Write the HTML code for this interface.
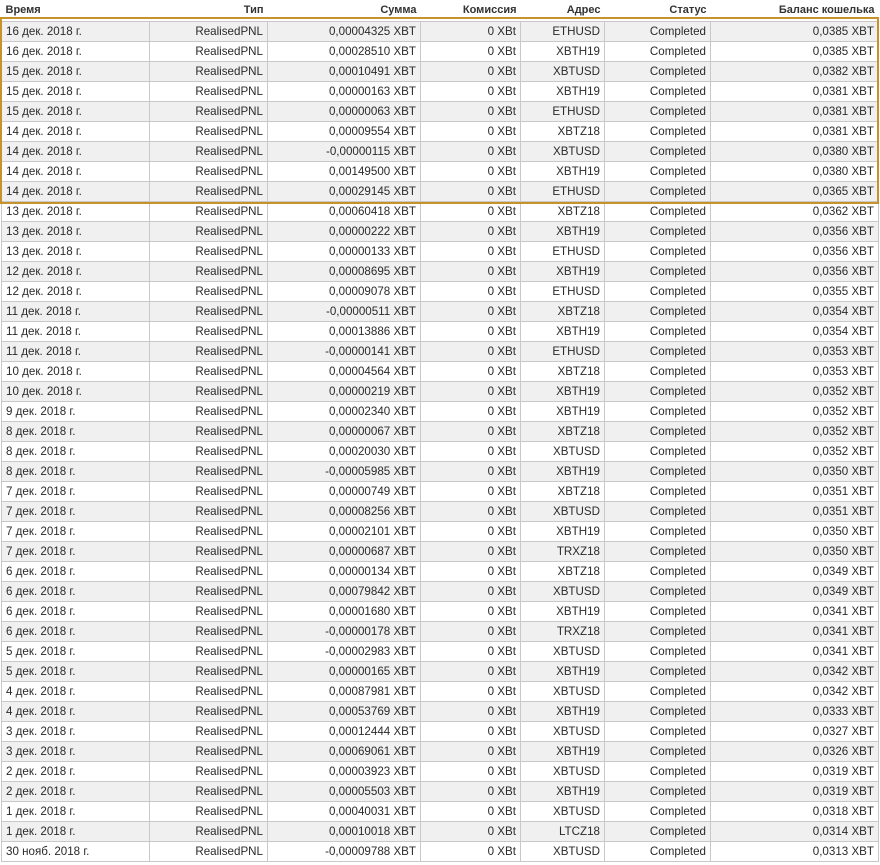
<!DOCTYPE html>
<html><head><meta charset="utf-8"><style>
html,body{margin:0;padding:0;background:#fff;width:880px;height:865px;overflow:hidden}
body{font-family:"Liberation Sans",sans-serif;font-size:11.6px;color:#2a2a2a}
table{position:absolute;left:1px;top:2px;border-collapse:collapse;table-layout:fixed;width:877px}
th{height:19px;font-weight:bold;color:#333;text-align:right;padding:0 4px;border:none;vertical-align:top;line-height:17px;font-size:11px}
th:first-child{text-align:left}
td{height:19px;padding:0 4px;border:1px solid #c8c8c8;text-align:right;line-height:19px;white-space:nowrap;overflow:hidden}
td:first-child{text-align:left}
tbody tr:nth-child(odd){background:#f0f0f0}
.box{position:absolute;left:0;top:17px;width:875px;height:183px;border:2px solid #c8922a;pointer-events:none}
</style></head><body>
<table>
<colgroup><col style="width:148px"><col style="width:118px"><col style="width:153px"><col style="width:100px"><col style="width:84px"><col style="width:106px"><col style="width:168px"></colgroup>
<thead><tr><th>Время</th><th>Тип</th><th>Сумма</th><th>Комиссия</th><th>Адрес</th><th>Статус</th><th>Баланс кошелька</th></tr></thead>
<tbody>
<tr><td>16 дек. 2018 г.</td><td>RealisedPNL</td><td>0,00004325 XBT</td><td>0 XBt</td><td>ETHUSD</td><td>Completed</td><td>0,0385 XBT</td></tr>
<tr><td>16 дек. 2018 г.</td><td>RealisedPNL</td><td>0,00028510 XBT</td><td>0 XBt</td><td>XBTH19</td><td>Completed</td><td>0,0385 XBT</td></tr>
<tr><td>15 дек. 2018 г.</td><td>RealisedPNL</td><td>0,00010491 XBT</td><td>0 XBt</td><td>XBTUSD</td><td>Completed</td><td>0,0382 XBT</td></tr>
<tr><td>15 дек. 2018 г.</td><td>RealisedPNL</td><td>0,00000163 XBT</td><td>0 XBt</td><td>XBTH19</td><td>Completed</td><td>0,0381 XBT</td></tr>
<tr><td>15 дек. 2018 г.</td><td>RealisedPNL</td><td>0,00000063 XBT</td><td>0 XBt</td><td>ETHUSD</td><td>Completed</td><td>0,0381 XBT</td></tr>
<tr><td>14 дек. 2018 г.</td><td>RealisedPNL</td><td>0,00009554 XBT</td><td>0 XBt</td><td>XBTZ18</td><td>Completed</td><td>0,0381 XBT</td></tr>
<tr><td>14 дек. 2018 г.</td><td>RealisedPNL</td><td>-0,00000115 XBT</td><td>0 XBt</td><td>XBTUSD</td><td>Completed</td><td>0,0380 XBT</td></tr>
<tr><td>14 дек. 2018 г.</td><td>RealisedPNL</td><td>0,00149500 XBT</td><td>0 XBt</td><td>XBTH19</td><td>Completed</td><td>0,0380 XBT</td></tr>
<tr><td>14 дек. 2018 г.</td><td>RealisedPNL</td><td>0,00029145 XBT</td><td>0 XBt</td><td>ETHUSD</td><td>Completed</td><td>0,0365 XBT</td></tr>
<tr><td>13 дек. 2018 г.</td><td>RealisedPNL</td><td>0,00060418 XBT</td><td>0 XBt</td><td>XBTZ18</td><td>Completed</td><td>0,0362 XBT</td></tr>
<tr><td>13 дек. 2018 г.</td><td>RealisedPNL</td><td>0,00000222 XBT</td><td>0 XBt</td><td>XBTH19</td><td>Completed</td><td>0,0356 XBT</td></tr>
<tr><td>13 дек. 2018 г.</td><td>RealisedPNL</td><td>0,00000133 XBT</td><td>0 XBt</td><td>ETHUSD</td><td>Completed</td><td>0,0356 XBT</td></tr>
<tr><td>12 дек. 2018 г.</td><td>RealisedPNL</td><td>0,00008695 XBT</td><td>0 XBt</td><td>XBTH19</td><td>Completed</td><td>0,0356 XBT</td></tr>
<tr><td>12 дек. 2018 г.</td><td>RealisedPNL</td><td>0,00009078 XBT</td><td>0 XBt</td><td>ETHUSD</td><td>Completed</td><td>0,0355 XBT</td></tr>
<tr><td>11 дек. 2018 г.</td><td>RealisedPNL</td><td>-0,00000511 XBT</td><td>0 XBt</td><td>XBTZ18</td><td>Completed</td><td>0,0354 XBT</td></tr>
<tr><td>11 дек. 2018 г.</td><td>RealisedPNL</td><td>0,00013886 XBT</td><td>0 XBt</td><td>XBTH19</td><td>Completed</td><td>0,0354 XBT</td></tr>
<tr><td>11 дек. 2018 г.</td><td>RealisedPNL</td><td>-0,00000141 XBT</td><td>0 XBt</td><td>ETHUSD</td><td>Completed</td><td>0,0353 XBT</td></tr>
<tr><td>10 дек. 2018 г.</td><td>RealisedPNL</td><td>0,00004564 XBT</td><td>0 XBt</td><td>XBTZ18</td><td>Completed</td><td>0,0353 XBT</td></tr>
<tr><td>10 дек. 2018 г.</td><td>RealisedPNL</td><td>0,00000219 XBT</td><td>0 XBt</td><td>XBTH19</td><td>Completed</td><td>0,0352 XBT</td></tr>
<tr><td>9 дек. 2018 г.</td><td>RealisedPNL</td><td>0,00002340 XBT</td><td>0 XBt</td><td>XBTH19</td><td>Completed</td><td>0,0352 XBT</td></tr>
<tr><td>8 дек. 2018 г.</td><td>RealisedPNL</td><td>0,00000067 XBT</td><td>0 XBt</td><td>XBTZ18</td><td>Completed</td><td>0,0352 XBT</td></tr>
<tr><td>8 дек. 2018 г.</td><td>RealisedPNL</td><td>0,00020030 XBT</td><td>0 XBt</td><td>XBTUSD</td><td>Completed</td><td>0,0352 XBT</td></tr>
<tr><td>8 дек. 2018 г.</td><td>RealisedPNL</td><td>-0,00005985 XBT</td><td>0 XBt</td><td>XBTH19</td><td>Completed</td><td>0,0350 XBT</td></tr>
<tr><td>7 дек. 2018 г.</td><td>RealisedPNL</td><td>0,00000749 XBT</td><td>0 XBt</td><td>XBTZ18</td><td>Completed</td><td>0,0351 XBT</td></tr>
<tr><td>7 дек. 2018 г.</td><td>RealisedPNL</td><td>0,00008256 XBT</td><td>0 XBt</td><td>XBTUSD</td><td>Completed</td><td>0,0351 XBT</td></tr>
<tr><td>7 дек. 2018 г.</td><td>RealisedPNL</td><td>0,00002101 XBT</td><td>0 XBt</td><td>XBTH19</td><td>Completed</td><td>0,0350 XBT</td></tr>
<tr><td>7 дек. 2018 г.</td><td>RealisedPNL</td><td>0,00000687 XBT</td><td>0 XBt</td><td>TRXZ18</td><td>Completed</td><td>0,0350 XBT</td></tr>
<tr><td>6 дек. 2018 г.</td><td>RealisedPNL</td><td>0,00000134 XBT</td><td>0 XBt</td><td>XBTZ18</td><td>Completed</td><td>0,0349 XBT</td></tr>
<tr><td>6 дек. 2018 г.</td><td>RealisedPNL</td><td>0,00079842 XBT</td><td>0 XBt</td><td>XBTUSD</td><td>Completed</td><td>0,0349 XBT</td></tr>
<tr><td>6 дек. 2018 г.</td><td>RealisedPNL</td><td>0,00001680 XBT</td><td>0 XBt</td><td>XBTH19</td><td>Completed</td><td>0,0341 XBT</td></tr>
<tr><td>6 дек. 2018 г.</td><td>RealisedPNL</td><td>-0,00000178 XBT</td><td>0 XBt</td><td>TRXZ18</td><td>Completed</td><td>0,0341 XBT</td></tr>
<tr><td>5 дек. 2018 г.</td><td>RealisedPNL</td><td>-0,00002983 XBT</td><td>0 XBt</td><td>XBTUSD</td><td>Completed</td><td>0,0341 XBT</td></tr>
<tr><td>5 дек. 2018 г.</td><td>RealisedPNL</td><td>0,00000165 XBT</td><td>0 XBt</td><td>XBTH19</td><td>Completed</td><td>0,0342 XBT</td></tr>
<tr><td>4 дек. 2018 г.</td><td>RealisedPNL</td><td>0,00087981 XBT</td><td>0 XBt</td><td>XBTUSD</td><td>Completed</td><td>0,0342 XBT</td></tr>
<tr><td>4 дек. 2018 г.</td><td>RealisedPNL</td><td>0,00053769 XBT</td><td>0 XBt</td><td>XBTH19</td><td>Completed</td><td>0,0333 XBT</td></tr>
<tr><td>3 дек. 2018 г.</td><td>RealisedPNL</td><td>0,00012444 XBT</td><td>0 XBt</td><td>XBTUSD</td><td>Completed</td><td>0,0327 XBT</td></tr>
<tr><td>3 дек. 2018 г.</td><td>RealisedPNL</td><td>0,00069061 XBT</td><td>0 XBt</td><td>XBTH19</td><td>Completed</td><td>0,0326 XBT</td></tr>
<tr><td>2 дек. 2018 г.</td><td>RealisedPNL</td><td>0,00003923 XBT</td><td>0 XBt</td><td>XBTUSD</td><td>Completed</td><td>0,0319 XBT</td></tr>
<tr><td>2 дек. 2018 г.</td><td>RealisedPNL</td><td>0,00005503 XBT</td><td>0 XBt</td><td>XBTH19</td><td>Completed</td><td>0,0319 XBT</td></tr>
<tr><td>1 дек. 2018 г.</td><td>RealisedPNL</td><td>0,00040031 XBT</td><td>0 XBt</td><td>XBTUSD</td><td>Completed</td><td>0,0318 XBT</td></tr>
<tr><td>1 дек. 2018 г.</td><td>RealisedPNL</td><td>0,00010018 XBT</td><td>0 XBt</td><td>LTCZ18</td><td>Completed</td><td>0,0314 XBT</td></tr>
<tr><td>30 нояб. 2018 г.</td><td>RealisedPNL</td><td>-0,00009788 XBT</td><td>0 XBt</td><td>XBTUSD</td><td>Completed</td><td>0,0313 XBT</td></tr>
</tbody></table>
<div class="box"></div>
</body></html>
